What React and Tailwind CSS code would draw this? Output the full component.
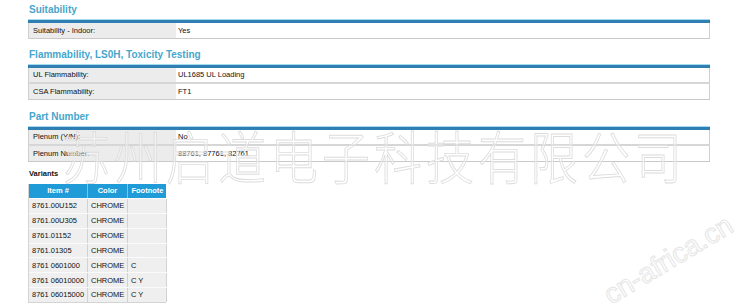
import React from "react";

function Bar() {
  return <div className="h-[4px] border-t border-[#a6d9ee] bg-[#2f7fb2]" />;
}

function Row({ label, value, last }) {
  return (
    <div
      className={
        "flex h-[16px] border-r border-l border-[#cfcfcf] " +
        (last ? "border-b border-b-[#c9c9c9]" : "border-b-2 border-b-[#d6d6d6]")
      }
    >
      <div className="w-[147px] bg-[#ececec] pl-[4px] flex items-center">{label}</div>
      <div className="flex-1 pl-[2px] flex items-center">{value}</div>
    </div>
  );
}

function Section({ title, rows, className }) {
  return (
    <div className={className}>
      <h2 className="text-[10px] font-bold leading-[12px] h-[12px] text-[#47a6cb] pl-[1px] mb-[3px]">{title}</h2>
      <Bar />
      {rows.map((r, i) => (
        <Row key={i} label={r[0]} value={r[1]} last={i === rows.length - 1} />
      ))}
    </div>
  );
}

const variants = [
  ["8761.00U152", "CHROME", ""],
  ["8761.00U305", "CHROME", ""],
  ["8761.01152", "CHROME", ""],
  ["8761.01305", "CHROME", ""],
  ["8761 0601000", "CHROME", "C"],
  ["8761 06010000", "CHROME", "C Y"],
  ["8761 06015000", "CHROME", "C Y"],
];

export default function App() {
  return (
    <div className="relative w-[749px] h-[308px] overflow-hidden bg-white text-[7.5px] text-[#111] font-['Liberation_Sans',Arial,sans-serif]">
      <div className="pl-[28px] pr-[39px] pt-[4px]">
        <Section title="Suitability" rows={[["Suitability - Indoor:", "Yes"]]} />
        <Section
          className="mt-[10px]"
          title="Flammability, LS0H, Toxicity Testing"
          rows={[
            ["UL Flammability:", "UL1685 UL Loading"],
            ["CSA Flammability:", "FT1"],
          ]}
        />
        <Section
          className="mt-[11px]"
          title="Part Number"
          rows={[
            ["Plenum (Y/N):", "No"],
            ["Plenum Number:", "88761, 87761, 82761"],
          ]}
        />
        <div className="mt-[7px] pl-[1px] font-bold leading-[10px]">Variants</div>
        <div className="relative z-10 mt-[5px] w-[138px] border-l border-b border-[#d4d4d4]">
          <div className="grid grid-cols-[59px_40px_39px] h-[14px] bg-[#1f9bd7] text-white font-bold">
            <div className="flex items-center justify-center border-r border-[#7cc4e8]">Item #</div>
            <div className="flex items-center justify-center border-r border-[#7cc4e8]">Color</div>
            <div className="flex items-center justify-center">Footnote</div>
          </div>
          {variants.map((v, i) => (
            <div key={i} className="grid grid-cols-[59px_40px_39px] h-[14.85px] bg-[#efefef] border-t border-[#fafafa]">
              <div className="flex items-center pl-[3px] border-r border-[#d2d2d2]">{v[0]}</div>
              <div className="flex items-center pl-[3px] border-r border-[#d2d2d2]">{v[1]}</div>
              <div className="flex items-center pl-[3px] border-r border-[#d2d2d2]">{v[2]}</div>
            </div>
          ))}
        </div>
      </div>

      {/* watermarks */}
      <div className="pointer-events-none absolute left-[62px] top-[124px] origin-left scale-x-[0.8] scale-y-[0.95] whitespace-nowrap text-[60px] leading-[60px] tracking-[5px] text-[rgba(255,255,255,0.35)] [-webkit-text-stroke:1px_#dddddd] font-['Noto_Sans_CJK_SC',sans-serif] font-light">
        苏州启道电子科技有限公司
      </div>
      <div className="pointer-events-none absolute left-[596px] top-[246px] -rotate-[31deg] whitespace-nowrap text-[28px] leading-[28px] text-transparent [-webkit-text-stroke:1px_#e6e6e6] font-['Liberation_Sans',sans-serif]">
        cn-africa.cn
      </div>
    </div>
  );
}
